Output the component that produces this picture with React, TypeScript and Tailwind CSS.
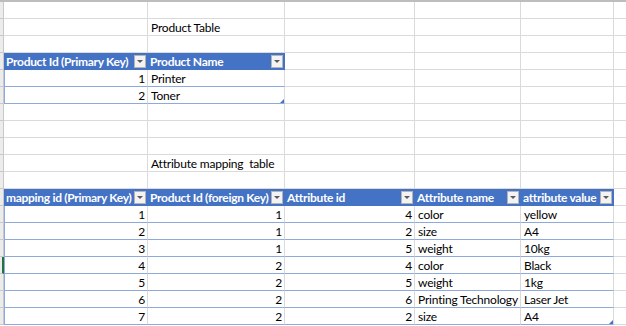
import clsx from "clsx";

const COL_W = ["w-[144px]", "w-[137px]", "w-[130px]", "w-[106px]", "w-[93px]"];

type RowSpec =
  | { kind: "plain"; text?: string }
  | { kind: "header"; labels: string[] }
  | { kind: "data"; values: (string | number)[]; last?: boolean };

const rows: RowSpec[] = [
  { kind: "plain" },
  { kind: "plain", text: "Product Table" },
  { kind: "plain" },
  { kind: "header", labels: ["Product Id (Primary Key)", "Product Name"] },
  { kind: "data", values: [1, "Printer"] },
  { kind: "data", values: [2, "Toner"], last: true },
  { kind: "plain" },
  { kind: "plain" },
  { kind: "plain" },
  { kind: "plain", text: "Attribute mapping  table" },
  { kind: "plain" },
  {
    kind: "header",
    labels: [
      "mapping id (Primary Key)",
      "Product Id (foreign Key)",
      "Attribute id",
      "Attribute name",
      "attribute value",
    ],
  },
  { kind: "data", values: [1, 1, 4, "color", "yellow"] },
  { kind: "data", values: [2, 1, 2, "size", "A4"] },
  { kind: "data", values: [3, 1, 5, "weight", "10kg"] },
  { kind: "data", values: [4, 2, 4, "color", "Black"] },
  { kind: "data", values: [5, 2, 5, "weight", "1kg"] },
  { kind: "data", values: [6, 2, 6, "Printing Technology", "Laser Jet"] },
  { kind: "data", values: [7, 2, 2, "size", "A4"], last: true },
];

function FilterButton() {
  return (
    <div className="mr-[1px] mt-[1px] flex h-[13px] w-[12px] shrink-0 items-center justify-center self-start border border-[#b4b4b4] bg-[#f3f3f3]">
      <div className="h-0 w-0 border-x-[3px] border-t-[3px] border-x-transparent border-t-[#5a5a5a]" />
    </div>
  );
}

function ResizeHandle() {
  return (
    <div className="absolute bottom-0 right-0 h-0 w-0 border-b-[4px] border-l-[4px] border-b-[#4472c4] border-l-transparent" />
  );
}

function Row({ spec, index }: { spec: RowSpec; index: number }) {
  const active = index === 15;
  const count = spec.kind === "header" ? spec.labels.length : spec.kind === "data" ? spec.values.length : 0;

  return (
    <div className="flex h-[17px]">
      <div
        className={clsx(
          "h-full w-[4px] shrink-0 border-b border-r border-[#c9c9c9] bg-[#ececec]",
          active && "border-r-2 border-r-[#217346]"
        )}
      />
      {COL_W.map((w, c) => {
        const inTable = c < count;
        const lastCol = c === count - 1;

        if (spec.kind === "header" && inTable) {
          return (
            <div
              key={c}
              className={clsx(
                "flex h-full shrink-0 items-center justify-between border-b border-r border-[#4472c4] bg-[#4472c4] pl-[2px] pt-[1px] font-bold tracking-[-0.3px] text-white",
                w
              )}
            >
              <span className="whitespace-nowrap">{spec.labels[c]}</span>
              <FilterButton />
            </div>
          );
        }

        if (spec.kind === "data" && inTable) {
          const v = spec.values[c];
          const isNum = typeof v === "number";
          return (
            <div
              key={c}
              className={clsx(
                "relative flex h-full shrink-0 items-center whitespace-nowrap border-b border-r border-b-[#8ea9db] border-r-[#dadada] pt-[1px] tracking-[-0.2px]",
                isNum ? "justify-end pr-[2px]" : "pl-[3px]",
                c === 0 && "border-l border-l-[#8ea9db]",
                lastCol && "border-r-[#8ea9db]",
                w
              )}
            >
              {v}
              {spec.last && lastCol && <ResizeHandle />}
            </div>
          );
        }

        return (
          <div
            key={c}
            className={clsx(
              "flex h-full shrink-0 items-center border-b border-r border-[#dadada] pl-[3px] pt-[1px] tracking-[-0.2px]",
              w
            )}
          >
            {spec.kind === "plain" && c === 1 && spec.text && (
              <span className="whitespace-pre">{spec.text}</span>
            )}
          </div>
        );
      })}
      <div className="h-full flex-1 border-b border-[#dadada]" />
    </div>
  );
}

export default function App() {
  return (
    <div className="h-[326px] w-[626px] overflow-hidden bg-white font-['Lato',sans-serif] text-[12px] leading-[17px] text-black">
      <div className="h-[2px] bg-[#bdbdbd]" />
      {rows.map((spec, i) => (
        <Row key={i} spec={spec} index={i} />
      ))}
    </div>
  );
}
